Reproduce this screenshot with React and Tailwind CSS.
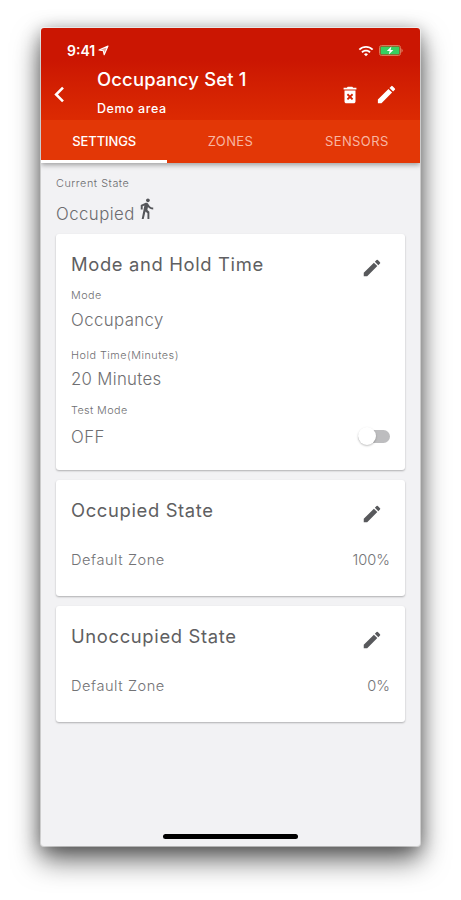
import React, { useState } from 'react'
import { MdChevronLeft, MdDeleteForever, MdDirectionsWalk, MdEdit, MdWifi } from 'react-icons/md'

const tabs = ['SETTINGS', 'ZONES', 'SENSORS']

const StatusBar = () => (
  <div className="flex h-[45px] items-center justify-between pl-[26px] pr-4 text-white">
    <div className="flex items-center gap-[3px]">
      <span className="text-[14px] leading-4 font-semibold">9:41</span>
      <svg width="11" height="11" viewBox="0 0 11 11">
        <path d="M1 5 10 1 6.2 9.8 5.3 5.7Z" fill="#fff" fillOpacity="0.6" stroke="#fff" strokeWidth="1.1" strokeLinejoin="round" />
      </svg>
    </div>
    <div className="flex items-center gap-[5px]">
      <MdWifi size={16} />
      <svg width="25" height="11" viewBox="0 0 25 11">
        <rect x="0.5" y="0.5" width="21" height="10" rx="2" fill="none" stroke="#d9785a" />
        <rect x="1.5" y="1.5" width="19" height="8" rx="1" fill="#36cf60" />
        <path d="M22.4 3.2Q25.2 5.5 22.4 7.8Z" fill="#d9785a" />
        <path d="M12.4 1.5 7.8 6H10.6L9.8 9.6 14.4 5H11.6Z" fill="#fff" />
      </svg>
    </div>
  </div>
)

const Card = ({ title, className, children }) => (
  <section className={`rounded-[3px] bg-white px-[15px] shadow-[0_1px_2px_rgba(0,0,0,0.28)] ${className}`}>
    <div className="flex items-start justify-between pt-[18px] pr-[7px]">
      <h2 className="text-[18.4px] leading-6 tracking-[0.65px] text-[#5f5f62]">{title}</h2>
      <button className="mt-[5px] text-[#58595c]">
        <MdEdit size={22} />
      </button>
    </div>
    {children}
  </section>
)

const ZoneLevel = ({ level }) => (
  <div className="mt-[25px] flex items-center justify-between text-[14.6px] leading-5 font-light text-[#737376]">
    <span className="tracking-[0.55px]">Default Zone</span>
    <span>{level}</span>
  </div>
)

const App = () => {
  const [activeTab, setActiveTab] = useState('SETTINGS')
  const [testMode, setTestMode] = useState(false)

  return (
    <div className="h-[900px] w-[461px] overflow-hidden bg-white pt-7 pl-[41px] font-['Inter',sans-serif]">
      <div className="flex h-[818px] w-[379px] flex-col overflow-hidden rounded-[3px] bg-[#f2f2f4] shadow-[0_0_0_1px_rgba(255,255,255,0.5),0_14px_28px_rgba(0,0,0,0.58),0_3px_18px_rgba(0,0,0,0.35)]">
        <header className="relative shadow-[0_2px_5px_rgba(0,0,0,0.35)]">
          <div className="h-[92px] bg-linear-to-b from-[#cb1602] from-35% to-[#dc2a02]">
            <StatusBar />
            <div className="-mt-[6px] flex items-center pr-[22px] text-white">
              <button className="mt-[7px] ml-[3px] w-[31px]">
                <MdChevronLeft size={31} />
              </button>
              <div className="ml-[22px] flex-1">
                <h1 className="text-[18.4px] leading-[25px] font-medium tracking-[0.2px]">Occupancy Set 1</h1>
                <p className="mt-[9px] -mb-[3px] text-[12.5px] leading-4 font-medium tracking-[0.55px]">Demo area</p>
              </div>
              <div className="flex items-center gap-[14px] pt-[8px]">
                <MdDeleteForever size={22} />
                <MdEdit size={23} />
              </div>
            </div>
          </div>
          <nav className="flex h-[43px] bg-[#e33706]">
            {tabs.map(tab => (
              <button
                key={tab}
                onClick={() => setActiveTab(tab)}
                className={`flex-1 border-b-[3px] pt-[4px] text-[13px] ${activeTab === tab ? 'border-white font-medium tracking-[-0.1px] text-white' : 'border-transparent tracking-[0.4px] text-[#f8b6a2]'}`}
              >
                {tab}
              </button>
            ))}
          </nav>
        </header>

        <main className="flex-1 px-[15px] pt-[13px]">
          <p className="text-[10.8px] leading-4 font-light tracking-[0.55px] text-[#6b6b6e]">Current State</p>
          <div className="mt-[5px] flex h-[26px] items-start text-[#6b6b6e]">
            <span className="pt-[5px] text-[16.8px] leading-6 font-light tracking-[0.45px]">Occupied</span>
            <MdDirectionsWalk size={23} className="text-[#55565a]" />
          </div>

          <div className="mt-[11px] flex flex-col gap-[10px]">
            <Card title="Mode and Hold Time" className="h-[236px]">
              <dl className="font-light text-[#6f6f72]">
                <dt className="mt-[9px] text-[10.8px] leading-4 tracking-[0.5px]">Mode</dt>
                <dd className="mt-[4px] text-[16.8px] leading-6 tracking-[0.4px]">Occupancy</dd>
                <dt className="mt-[16px] text-[10.8px] leading-4 tracking-[0.5px]">Hold Time(Minutes)</dt>
                <dd className="mt-[3px] text-[16.8px] leading-6 tracking-[0.3px]">20 Minutes</dd>
                <dt className="mt-[12px] text-[10.8px] leading-4 tracking-[0.4px]">Test Mode</dt>
                <dd className="mt-[6px] flex items-center justify-between text-[16.8px] leading-6 tracking-[0.4px]">
                  <span>{testMode ? 'ON' : 'OFF'}</span>
                  <button
                    onClick={() => setTestMode(prev => !prev)}
                    className={`-mt-[2px] flex h-[13px] w-[32px] items-center rounded-full bg-[#bdbdbf] ${testMode ? 'justify-end' : ''}`}
                  >
                    <span className="h-[18px] w-[18px] rounded-full bg-white shadow-[0_1px_2px_rgba(0,0,0,0.25)]"></span>
                  </button>
                </dd>
              </dl>
            </Card>
            <Card title="Occupied State" className="h-[116px]">
              <ZoneLevel level="100%" />
            </Card>
            <Card title="Unoccupied State" className="h-[116px]">
              <ZoneLevel level="0%" />
            </Card>
          </div>
        </main>

        <div className="mx-auto mb-[7px] h-[5px] w-[135px] rounded-full bg-black"></div>
      </div>
    </div>
  )
}

export default App
